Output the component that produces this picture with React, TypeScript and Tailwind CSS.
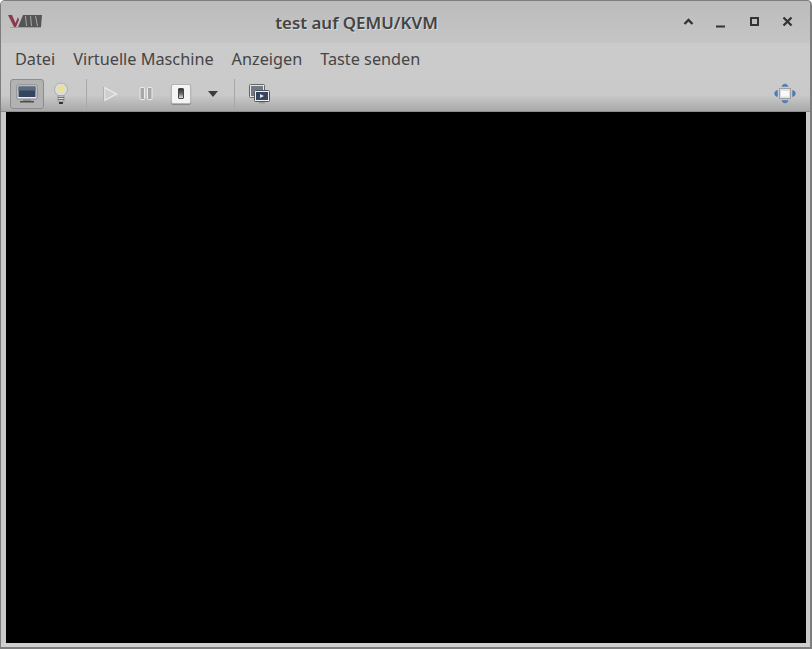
import React from "react";

const Sep = () => <div className="w-px h-[30px] bg-[#a8a8a8] mx-[8px]" />;

export default function App() {
  return (
    <div className="w-[812px] h-[649px] overflow-hidden bg-white font-['Noto_Sans',sans-serif]">
      <div className="w-full h-full flex flex-col bg-[#cacaca] border border-[#7d7d7d] border-b-2 border-r-2 rounded-t-[5px] overflow-hidden">
        <div className="h-[42px] shrink-0 flex items-center relative bg-gradient-to-b from-[#bcbcbc] to-[#c5c5c5] pl-[7px]">
          <svg width="34" height="16" viewBox="0 0 34 16" className="shrink-0 mt-[-2px]">
            <path d="M0 2h4l3.500 8L10 4l1 3-3 7H6z" fill="#8a3a4c" />
            <path d="M10 14l5-12h19v0l-1 12z" fill="#555555" />
            <path d="M17.500 3l1 10M22.500 3l1 10M27.500 3l2 10" stroke="#a8a8a8" strokeWidth="1" fill="none" />
            <rect x="2" y="14" width="31" height="1" fill="#a0a0a0" />
          </svg>
          <div className="absolute left-0 w-[711px] top-[11px] text-center text-[16.9px] leading-[22px] font-semibold text-[#444444] [text-shadow:1px_1px_0_rgba(255,255,255,0.45)]">test auf QEMU/KVM</div>
          <div className="ml-auto flex items-center">
            <svg width="120" height="16" viewBox="0 0 120 16" className="mr-[7px] mt-[-1px]" fill="none" stroke="#333333" strokeWidth="2">
              <path d="M1.500 11l4-4 4 4" strokeWidth="2.300" transform="translate(0 -1)" />
              <path d="M33 12.500h9" />
              <rect x="68" y="4" width="7" height="7" />
              <path d="M100.500 3.500l8 8M108.500 3.500l-8 8" strokeWidth="2.300" />
            </svg>
          </div>
        </div>

        <div className="h-[33px] shrink-0 flex items-center gap-[18px] pl-[14px] pb-[2px] text-[16.25px] leading-[22px] text-[#454545] bg-[#cbcbcb]">
          <span>Datei</span>
          <span>Virtuelle Maschine</span>
          <span>Anzeigen</span>
          <span>Taste senden</span>
        </div>

        <div className="h-[36px] shrink-0 flex items-center pl-[9px] pr-[9px] bg-gradient-to-b from-[#cbcbcb] via-[#c9c9c9] via-[55%] to-[#a9a9a9] border-b border-[#8e8e8e]">
          <div className="w-[34px] h-[30px] rounded-[3px] border border-[#8d8d8d] bg-[#b2b2b2] flex items-center justify-center">
            <svg width="22" height="20" viewBox="0 0 22 20">
              <rect x="1" y="1" width="20" height="14" rx="1" fill="#e8e8e8" stroke="#777777" strokeWidth="0.800" />
              <rect x="2.500" y="2.500" width="17" height="10.500" fill="#34465f" />
              <rect x="2.500" y="2.500" width="17" height="4" fill="#5a6b82" />
              <rect x="7" y="15.500" width="8" height="1.500" fill="#8a8a8a" />
              <rect x="4" y="17" width="14" height="1.500" fill="#4a4a4a" />
            </svg>
          </div>
          <div className="w-[34px] h-[30px] flex items-center justify-center">
            <svg width="16" height="24" viewBox="0 0 16 24">
              <circle cx="8" cy="7.500" r="6.500" fill="#dcdcd6" stroke="#a5a5a5" strokeWidth="0.800" />
              <path d="M4 6c2-2 6-2 8 0-1 2-2 3-4 3s-3-1-4-3z" fill="#f2e27a" />
              <rect x="5" y="14" width="6" height="5" fill="#e0e0e0" stroke="#777777" strokeWidth="0.600" />
              <path d="M5 15.500h6M5 17.500h6" stroke="#555555" strokeWidth="0.800" />
              <rect x="6" y="20" width="4" height="2" fill="#333333" />
            </svg>
          </div>
          <Sep />
          <div className="w-[32px] h-[30px] flex items-center justify-center">
            <svg width="15" height="16" viewBox="0 0 15 16" className="ml-[-2px]">
              <path d="M1.500 1.500L13.500 8 1.500 14.500z" fill="#cfcfcf" stroke="#ececec" strokeWidth="1.300" />
              <path d="M0.700 1v14" stroke="#9a9a9a" strokeWidth="0.700" />
            </svg>
          </div>
          <div className="w-[38px] h-[30px] flex items-center justify-center">
            <svg width="14" height="13" viewBox="0 0 14 13">
              <rect x="1" y="0.500" width="4.500" height="12" rx="0.800" fill="#a8a8a8" stroke="#ececec" />
              <rect x="8.500" y="0.500" width="4.500" height="12" rx="0.800" fill="#a8a8a8" stroke="#ececec" />
            </svg>
          </div>
          <div className="w-[34px] h-[30px] flex items-center justify-center">
            <div className="w-[20px] h-[20px] ml-[-2px] rounded-[2px] bg-[#f4f4f4] border border-[#b5b5b5] shadow-[0_1px_1px_#888888] flex items-center justify-center">
              <div className="w-[6px] h-[11px] rounded-[1px] bg-gradient-to-b from-[#333333] via-[#666666] to-[#e0e0e0] border border-[#444444]" />
            </div>
          </div>
          <div className="w-[27px] h-[30px] flex items-center justify-center">
            <svg width="10" height="6" viewBox="0 0 10 6"><path d="M0 0h10L5 6z" fill="#3c3c3c" /></svg>
          </div>
          <Sep />
          <div className="w-[34px] h-[30px] flex items-center justify-center mr-auto ml-[-1px]">
            <svg width="21" height="20" viewBox="0 0 21 20">
              <rect x="0.500" y="0.500" width="15" height="13" rx="1" fill="#e6e6e6" stroke="#666666" />
              <rect x="2" y="2" width="12" height="10" fill="#6f7a89" />
              <rect x="5.500" y="6.500" width="15" height="11" rx="1" fill="#f0f0f0" stroke="#555555" />
              <rect x="7" y="8" width="12" height="8" fill="#34465f" />
              <path d="M11 10l4 2-4 2z" fill="#e6e6e6" />
              <rect x="10" y="18" width="6" height="1.500" fill="#999999" />
            </svg>
          </div>
          <div className="w-[24px] h-[24px] flex items-center justify-center mr-[4px]">
            <svg width="24" height="21" viewBox="0 0 24 21">
              <path d="M9 3.300c1-2.800 5-2.800 6 0zM9 17.700c1 2.800 5 2.800 6 0zM4.300 7.500c-3.400 .5-3.400 5.500 0 6zM19.700 7.500c3.400 .5 3.400 5.500 0 6z" fill="#4f7fc4" stroke="#3a68b0" strokeWidth="0.600" />
              <rect x="6.500" y="5.500" width="11" height="10" fill="#dedede" stroke="#a0a0a0" />
              <rect x="8" y="8" width="8" height="5.500" fill="#fafafa" />
            </svg>
          </div>
        </div>

        <div className="flex-1 mx-[5px] mr-[4px] bg-black" />
        <div className="h-[4px] shrink-0 bg-[#cfcfcf]" />
      </div>
    </div>
  );
}
